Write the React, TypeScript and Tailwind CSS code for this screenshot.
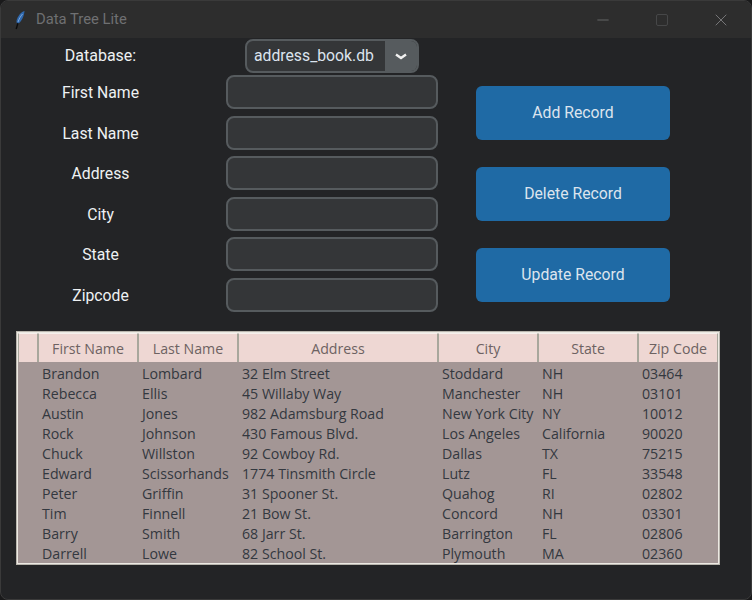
import { Minus, X } from "lucide-react";

const LABELS = ["First Name", "Last Name", "Address", "City", "State", "Zipcode"];
const ACTIONS = ["Add Record", "Delete Record", "Update Record"];

const COLUMNS = [
  { title: "", width: "w-[20px]" },
  { title: "First Name", width: "w-[100px]" },
  { title: "Last Name", width: "w-[100px]" },
  { title: "Address", width: "w-[200px]" },
  { title: "City", width: "w-[100px]" },
  { title: "State", width: "w-[100px]" },
  { title: "Zip Code", width: "w-[80px]" },
];

const ROWS = [
  ["Brandon", "Lombard", "32 Elm Street", "Stoddard", "NH", "03464"],
  ["Rebecca", "Ellis", "45 Willaby Way", "Manchester", "NH", "03101"],
  ["Austin", "Jones", "982 Adamsburg Road", "New York City", "NY", "10012"],
  ["Rock", "Johnson", "430 Famous Blvd.", "Los Angeles", "California", "90020"],
  ["Chuck", "Willston", "92 Cowboy Rd.", "Dallas", "TX", "75215"],
  ["Edward", "Scissorhands", "1774 Tinsmith Circle", "Lutz", "FL", "33548"],
  ["Peter", "Griffin", "31 Spooner St.", "Quahog", "RI", "02802"],
  ["Tim", "Finnell", "21 Bow St.", "Concord", "NH", "03301"],
  ["Barry", "Smith", "68 Jarr St.", "Barrington", "FL", "02806"],
  ["Darrell", "Lowe", "82 School St.", "Plymouth", "MA", "02360"],
];

const CELL_WIDTHS = ["w-[100px]", "w-[100px]", "w-[200px]", "w-[100px]", "w-[100px]", "w-[80px]"];

function TitleBar() {
  return (
    <div className="flex h-[37px] shrink-0 items-center bg-[#2d2d2d] pl-[13px] text-[#6f7072]">
      {/* tk default feather */}
      <svg width="12" height="20" viewBox="0 0 12 20" className="shrink-0">
        <path d="M10.5 1 C7 2 3.5 6 2.5 11 C2.5 13 3 14 4 14 C7 12 10 7 10.5 1 Z" fill="#2f68ad" />
        <path d="M8.5 4 C6.5 6.5 5 9 4 12" stroke="#7fa9dc" strokeWidth="1" fill="none" />
        <path d="M4 13 L2.2 19" stroke="#0c0c0c" strokeWidth="1.4" fill="none" />
      </svg>
      <span className="ml-[10px] text-[14.8px]">Data Tree Lite</span>
      <div className="ml-auto flex items-center">
        <Minus size={18} className="mr-[44px] text-[#77787a]" strokeWidth={1} />
        <div className="mr-[43px] h-[12px] w-[12px] rounded-[2px] border border-[#464748]" />
        <X size={20} className="mr-[20px] text-[#858688]" strokeWidth={1} />
      </div>
    </div>
  );
}

function Form() {
  return (
    <div className="flex">
      <div className="flex w-[437px] shrink-0 flex-col">
        <div className="flex h-[36px] items-center">
          <span className="w-[199px] text-center text-[16px] text-[#eef1f3]">Database:</span>
          <div className="ml-[45px] flex h-[34px] w-[174px] overflow-hidden rounded-[8px] border-2 border-[#565b5e] bg-[#343638]">
            <span className="flex flex-1 items-center pl-[7px] text-[15.75px] text-[#dce4ee]">address_book.db</span>
            <div className="flex w-[32px] items-center justify-center bg-[#565b5e]">
              <svg width="12" height="7" viewBox="0 0 12 7" fill="none" stroke="#f1f1f1" strokeWidth="2.4">
                <path d="M1 1.5 L6 5 L11 1.5" />
              </svg>
            </div>
          </div>
        </div>
        <div className="mt-[1px] flex flex-col gap-[6.5px]">
          {LABELS.map((label) => (
            <div key={label} className="flex h-[34px] items-center">
              <span className="w-[199px] translate-y-[1px] text-center text-[15.75px] text-[#eef1f3]">{label}</span>
              <div className="ml-[26px] h-[34px] w-[212px] rounded-[8px] border-2 border-[#565b5e] bg-[#343638]" />
            </div>
          ))}
        </div>
      </div>
      <div className="ml-[38px] flex flex-col gap-[27px] pt-[48px]">
        {ACTIONS.map((action) => (
          <button
            key={action}
            type="button"
            className="h-[54px] w-[194px] rounded-[6px] bg-[#1f6aa5] text-center text-[15.75px] text-[#dce4ee]"
          >
            {action}
          </button>
        ))}
      </div>
    </div>
  );
}

function RecordsTable() {
  return (
    <div className="ml-[15px] mt-[19px] w-[704px] border border-[#b9b6ae] bg-[#a39695] font-['Open_Sans',sans-serif] text-[14.2px]">
      <div className="border border-[#ece9e3]">
        <div className="flex h-[29px] bg-[#eed7d3]">
          {COLUMNS.map((col, i) => (
            <div
              key={i}
              className={`${col.width} flex items-center justify-center border-x border-x-[#a8a79c] border-t border-t-[#f5f0ec] pt-[3px] text-[#6d6262]`}
            >
              {col.title}
            </div>
          ))}
        </div>
        <div className="h-[201px] overflow-hidden pt-[2px]">
          {ROWS.map((row) => (
            <div key={row[0]} className="flex h-[20px] items-center pl-[20px] text-[#33383f]">
              {row.map((cell, i) => (
                <span key={i} className={`${CELL_WIDTHS[i]} whitespace-nowrap pl-[4px]`}>
                  {cell}
                </span>
              ))}
            </div>
          ))}
        </div>
      </div>
    </div>
  );
}

export default function App() {
  return (
    <div className="h-[600px] w-[752px] overflow-hidden bg-[#1a1a1b] font-['Roboto',sans-serif]">
      <div className="flex h-[600px] flex-col overflow-hidden rounded-[8px] border border-[#3a3a3a] bg-[#232426]">
        <TitleBar />
        <Form />
        <RecordsTable />
      </div>
    </div>
  );
}
